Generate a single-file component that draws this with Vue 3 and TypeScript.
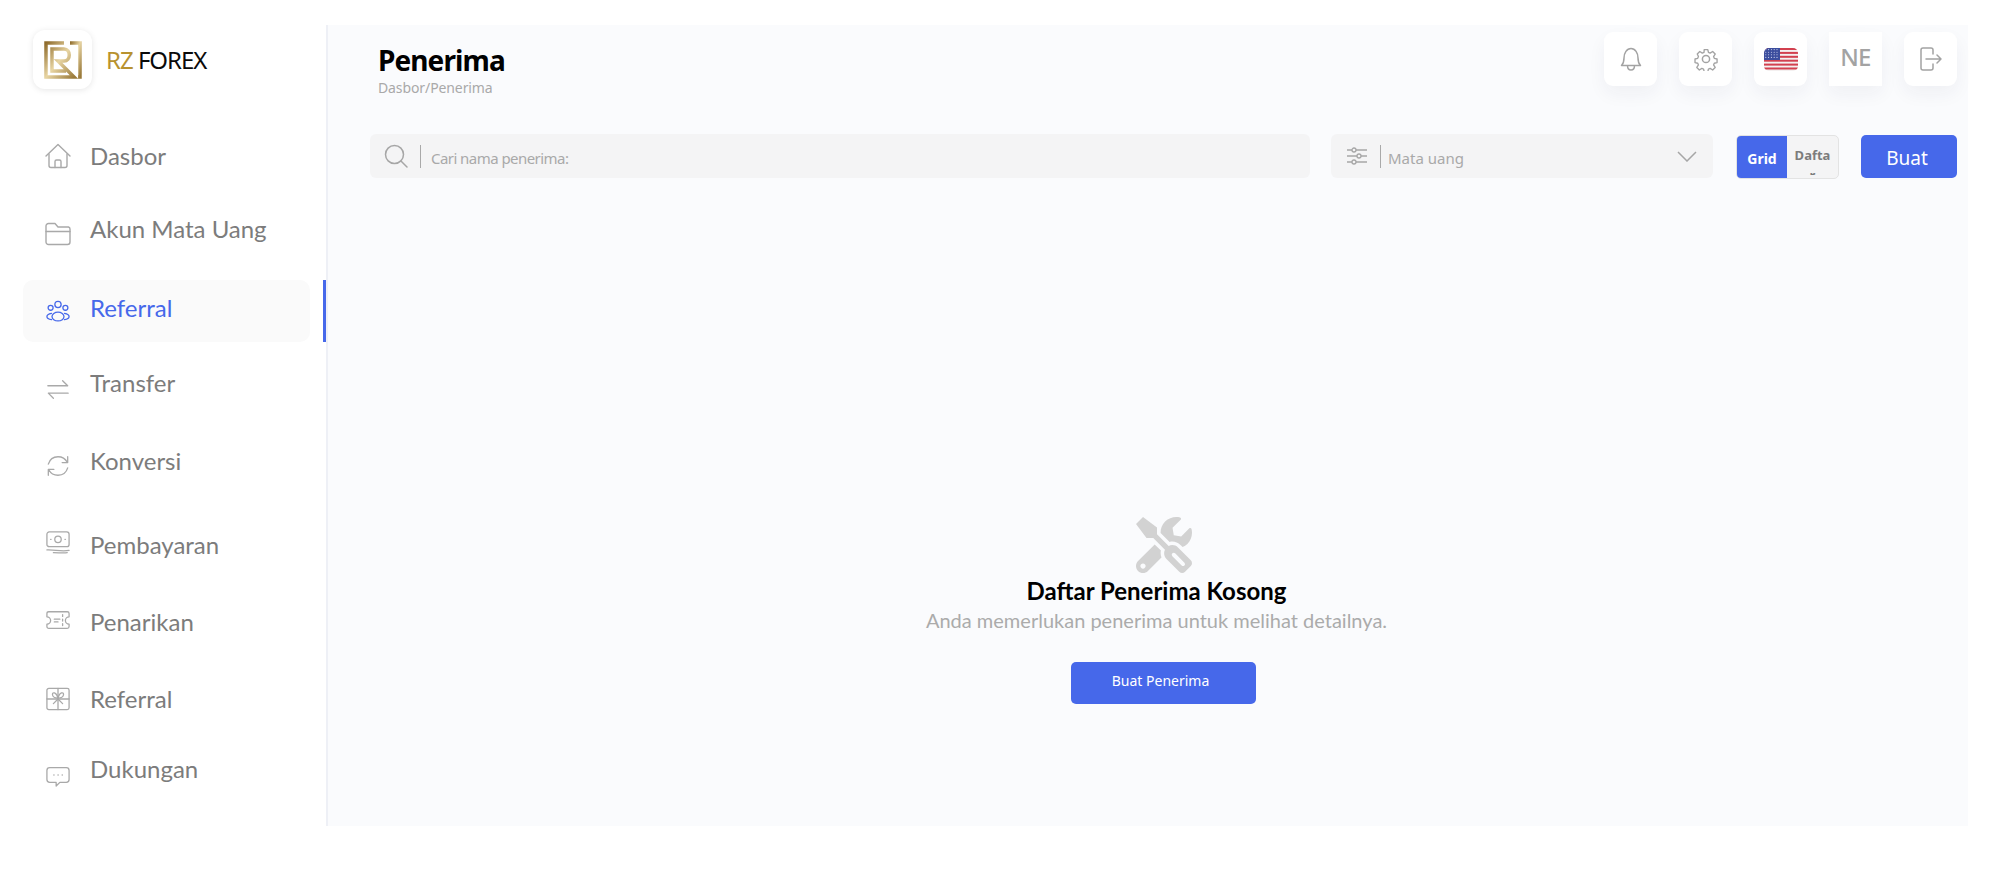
<template>
  <div class="page">
    <aside class="sidebar">
      <div class="brand">
        <div class="logo-box">
          <svg width="38" height="38" viewBox="0 0 38 38" fill="none">
            <defs>
              <linearGradient id="gold" x1="0" y1="0" x2="1" y2="1">
                <stop offset="0" stop-color="#8f6c2c" />
                <stop offset="0.5" stop-color="#e8d5a3" />
                <stop offset="1" stop-color="#9a7a3a" />
              </linearGradient>
            </defs>
            <path d="M20 2H2V36H30L14 20H20C27 20 27 8 20 8H8V30H22" stroke="url(#gold)" stroke-width="3.500" />
            <path d="M26 2H36V36H34" stroke="url(#gold)" stroke-width="3.500" />
          </svg>
        </div>
        <div class="brand-name"><span class="gold">RZ</span> FOREX</div>
      </div>

      <nav class="nav">
        <a
          v-for="item in navItems"
          :key="item.icon"
          class="nav-item"
          :class="{ active: item.active }"
          :style="{ marginTop: item.gap + 'px' }"
        >
          <svg
            class="nav-icon"
            :class="{ small: item.icon !== 'home' && item.icon !== 'folder' }"
            :style="{ transform: `translateY(${item.dy}px)` }"
            viewBox="0 0 26 26"
            fill="none"
            stroke="currentColor"
            stroke-width="1.4"
            stroke-linecap="round"
            stroke-linejoin="round"
          >
            <template v-if="item.icon === 'home'">
              <path d="M1 13 13 1.500 25 13" />
              <path d="M4 11v11.500a2 2 0 0 0 2 2h14a2 2 0 0 0 2-2V11" />
              <path d="M10 24.500v-6a1.500 1.500 0 0 1 1.500-1.500h3a1.500 1.500 0 0 1 1.500 1.500v6" />
            </template>
            <template v-else-if="item.icon === 'folder'">
              <path d="M1 8V6a2.500 2.500 0 0 1 2.500-2.500h6.500l3 3.500h10.500A2 2 0 0 1 25 9v13a2.500 2.500 0 0 1-2.500 2.500h-19A2.500 2.500 0 0 1 1 22z" />
              <path d="M1 11.500h24" />
            </template>
            <template v-else-if="item.icon === 'group'">
              <circle cx="13" cy="6" r="3.400" />
              <circle cx="5" cy="9.500" r="2.700" />
              <circle cx="21" cy="9.500" r="2.700" />
              <ellipse cx="13" cy="19" rx="6.500" ry="4.800" />
              <path d="M6 15.500c-3 .5-5 1.800-5 3.500s2 3 5 3.400M20 15.500c3 .5 5 1.800 5 3.500s-2 3-5 3.400" />
            </template>
            <template v-else-if="item.icon === 'transfer'">
              <path d="M2 9.500h21M18 4l5.500 5.500" />
              <path d="M24 17.500H3M8 23l-5.500-5.500" />
            </template>
            <template v-else-if="item.icon === 'sync'">
              <path d="M2.500 11C4 6 8 3 13 3c4.500 0 8 2.200 10 6M23.500 3v6.300h-6" />
              <path d="M23.500 15c-1.500 5-5.500 8-10.500 8-4.500 0-8-2.200-10-6M2.500 23v-6.300h6" />
            </template>
            <template v-else-if="item.icon === 'money'">
              <rect x="1" y="1" width="24" height="16" rx="2.500" />
              <circle cx="13" cy="9" r="3.500" />
              <path d="M5 9h.5M20.500 9h.5M1 20.500c8-.5 15 2 24 .5M8 23.500c6 0 11 .5 15 0" />
            </template>
            <template v-else-if="item.icon === 'ticket'">
              <path d="M1 5a2 2 0 0 1 2-2h20a2 2 0 0 1 2 2v3.500a4 4 0 0 0 0 8V19a2 2 0 0 1-2 2H3a2 2 0 0 1-2-2v-2.500a4 4 0 0 0 0-8z" />
              <path d="M9 11h6M9 14h4M18 6v2M18 11v2M18 16v2" />
            </template>
            <template v-else-if="item.icon === 'gift'">
              <rect x="1" y="1.500" width="24" height="23" rx="2" />
              <path d="M1 13h24M13 1.500v23" />
              <path d="M13 12c-3 0-6-1.500-6-4s4-3 6 4c2-7 6-6.500 6-4s-3 4-6 4zM13 13l-5 5M13 13l5 5" />
            </template>
            <template v-else>
              <path d="M4 5h18a3 3 0 0 1 3 3v10a3 3 0 0 1-3 3h-7l-4 4v-4H4a3 3 0 0 1-3-3V8a3 3 0 0 1 3-3z" />
              <path d="M8.500 13h.2M13 13h.2M17.500 13h.2" />
            </template>
          </svg>
          <span class="nav-label">{{ item.label }}</span>
          <span v-if="item.active" class="active-bar"></span>
        </a>
      </nav>
    </aside>

    <main class="main">
      <header class="top">
        <div class="title-block">
          <h1>Penerima</h1>
          <p>Dasbor/Penerima</p>
        </div>
        <div class="top-actions">
          <button class="square">
            <svg width="22" height="26" viewBox="0 0 22 26" fill="none" stroke="#a3a3a3" stroke-width="1.500" stroke-linejoin="round">
              <path d="M1.500 19.500c2-2 2.500-3.500 2.500-7.500 0-5 2.800-9.500 7-9.500s7 4.500 7 9.500c0 4 .5 5.500 2.500 7.500z" />
              <path d="M7.500 19.500c0 6 7 6 7 0" />
            </svg>
          </button>
          <button class="square">
            <svg width="24" height="24" viewBox="0 0 24 24" fill="none" stroke="#a3a3a3" stroke-width="1.500" stroke-linejoin="round">
              <circle cx="12" cy="12" r="3.600" />
              <path d="M10 1.500h4l.7 3.200 1.900.8 2.800-1.800 2.800 2.800-1.800 2.800.8 1.900 3.100.8v4l-3.100.7-.8 1.900 1.800 2.800-2.800 2.800-2.800-1.800-1.900.8-.7 3h-4l-.7-3-1.900-.8-2.800 1.800-2.800-2.800 1.800-2.800-.8-1.900-3-.7v-4l3-.8.8-1.900L2.300 6.500l2.800-2.800 2.800 1.800 1.900-.8z" transform="translate(1.200 1.200) scale(.9)" />
            </svg>
          </button>
          <button class="square">
            <svg width="34" height="23" viewBox="0 0 34 23">
              <defs>
                <clipPath id="flagclip"><rect width="34" height="23" rx="5" /></clipPath>
              </defs>
              <g clip-path="url(#flagclip)">
                <rect width="34" height="23" fill="#f4f0f0" />
                <rect v-for="i in 6" :key="i" :y="(i - 1) * 3.900" width="34" height="2" fill="#d2404f" />
                <rect width="16" height="12" fill="#3c4e9e" />
                <template v-for="r in 4" :key="r">
                  <circle v-for="c in 5" :key="c" :cx="c * 2.800 - 1" :cy="r * 2.600 - 1" r=".55" fill="#cfd5ee" />
                </template>
              </g>
            </svg>
          </button>
          <button class="square lang">NE</button>
          <button class="square">
            <svg width="22" height="24" viewBox="0 0 22 24" fill="none" stroke="#a3a3a3" stroke-width="1.500" stroke-linecap="round" stroke-linejoin="round">
              <path d="M13 7V3a2 2 0 0 0-2-2H3a2 2 0 0 0-2 2v18a2 2 0 0 0 2 2h8a2 2 0 0 0 2-2v-4" />
              <path d="M6 12h15M17 8l4 4-4 4" />
            </svg>
          </button>
        </div>
      </header>

      <div class="toolbar">
        <div class="field search">
          <svg width="24" height="24" viewBox="0 0 24 24" fill="none" stroke="#a6a6a6" stroke-width="1.500" stroke-linecap="round">
            <circle cx="10.500" cy="10.500" r="9" />
            <path d="m17 17 6 6" />
          </svg>
          <span class="sep"></span>
          <span class="placeholder cari">Cari nama penerima:</span>
        </div>
        <div class="field select">
          <svg width="20" height="18" viewBox="0 0 20 18" fill="none" stroke="#a6a6a6" stroke-width="1.300">
            <path d="M0 3h5M9 3h11M0 9h10M14 9h6M0 15h5M9 15h11" />
            <circle cx="7" cy="3" r="2" />
            <circle cx="12" cy="9" r="2" />
            <circle cx="7" cy="15" r="2" />
          </svg>
          <span class="sep"></span>
          <span class="placeholder">Mata uang</span>
          <svg class="chevron" width="20" height="11" viewBox="0 0 20 11" fill="none" stroke="#a6a6a6" stroke-width="1.500">
            <path d="m1 1 9 9 9-9" />
          </svg>
        </div>
        <div class="toggle">
          <span class="seg on">Grid</span>
          <span class="seg off"><span class="wrap">Daftar</span></span>
        </div>
        <button class="primary create">Buat</button>
      </div>

      <section class="empty">
        <svg class="tools" width="56" height="58" viewBox="0 0 512 512">
          <path fill="#d2d2d2" d="M501.100 395.700L384 278.600c-23.100-23.100-57.600-27.600-85.400-13.900L192 158.100V96L64 0 0 64l96 128h62.100l106.600 106.600c-13.600 27.800-9.200 62.300 13.900 85.400l117.100 117.100c14.600 14.600 38.200 14.600 52.700 0l52.700-52.700c14.500-14.600 14.500-38.200 0-52.700zM331.700 225c28.300 0 54.900 11 74.900 31l19.400 19.400c15.800-6.900 30.800-16.500 43.800-29.500 37.100-37.100 49.700-89.300 37.900-136.700-2.200-9-13.500-12.100-20.100-5.500l-74.400 74.400-67.900-11.300L334 98.900l74.400-74.400c6.600-6.600 3.400-17.900-5.700-20.200-47.400-11.700-99.600.9-136.600 37.900-28.500 28.500-41.900 66.100-41.200 103.600l82.100 82.100c8.100-1.900 16.500-2.900 24.700-2.900zm-103.900 82l-56.700-56.700L18.700 402.800c-25 25-25 65.500 0 90.500s65.500 25 90.500 0l123.600-123.600c-7.600-19.900-9.900-41.600-5-62.700zM64 472c-13.200 0-24-10.800-24-24 0-13.300 10.700-24 24-24s24 10.700 24 24c0 13.200-10.700 24-24 24z" />
          <path d="M345 345l85 85" stroke="#fafbfd" stroke-width="36" stroke-linecap="round" />
        </svg>
        <h2>Daftar Penerima Kosong</h2>
        <p>Anda memerlukan penerima untuk melihat detailnya.</p>
        <button class="primary cta">Buat Penerima</button>
      </section>
    </main>
  </div>
</template>

<script setup lang="ts">
interface NavItem {
  label: string;
  icon: string;
  gap: number;
  dy: number;
  active?: boolean;
}

const navItems: NavItem[] = [
  { label: "Dasbor", icon: "home", gap: 0, dy: -1 },
  { label: "Akun Mata Uang", icon: "folder", gap: 11, dy: 3 },
  { label: "Referral", icon: "group", gap: 19, dy: 0, active: true },
  { label: "Transfer", icon: "transfer", gap: 11, dy: 5 },
  { label: "Konversi", icon: "sync", gap: 16, dy: 4 },
  { label: "Pembayaran", icon: "money", gap: 22, dy: -3 },
  { label: "Penarikan", icon: "ticket", gap: 15, dy: -2 },
  { label: "Referral", icon: "gift", gap: 15, dy: -1 },
  { label: "Dukungan", icon: "chat", gap: 8, dy: 5 },
];
</script>

<style>
html,
body {
  background: #fff;
}
</style>

<style scoped>
.page {
  display: flex;
  box-sizing: border-box;
  height: 870px;
  padding: 25px 30px 44px 0;
  font-family: "Noto Sans", "Open Sans", sans-serif;
  overflow: hidden;
}

.sidebar {
  box-sizing: border-box;
  width: 328px;
  flex-shrink: 0;
  border-right: 2px solid #eef0f6;
}

.brand {
  display: flex;
  align-items: center;
  gap: 14px;
  margin: 5px 0 37px 33px;
}

.logo-box {
  width: 59px;
  height: 59px;
  display: flex;
  align-items: center;
  justify-content: center;
  background: #fff;
  border-radius: 12px;
  box-shadow: 0 1px 6px rgba(0, 0, 0, 0.1);
}

.brand-name {
  font-size: 24px;
  letter-spacing: -1px;
  color: #0a0a0a;
}

.gold {
  color: #b8922f;
}

.nav {
  display: flex;
  flex-direction: column;
}

.nav-item {
  position: relative;
  display: flex;
  align-items: center;
  gap: 19px;
  box-sizing: border-box;
  width: 287px;
  height: 62px;
  margin-left: 23px;
  padding-left: 22px;
  border-radius: 10px;
  color: #7c7c7c;
  font-family: Lato, "Open Sans", sans-serif;
  font-size: 24px;
}

.nav-label {
  margin-top: -3px;
}

.nav-icon {
  flex-shrink: 0;
  width: 26px;
  height: 26px;
  color: #a9a9a9;
}

.nav-icon.small {
  width: 24px;
  height: 24px;
  margin: 0 1px;
}

.nav-item.active {
  background: #fafafa;
  color: #4668ea;
}

.nav-item.active .nav-icon {
  color: #4668ea;
}

.nav-item.active .nav-label {
  margin-top: -7px;
}

.active-bar {
  position: absolute;
  right: -16px;
  top: 0;
  bottom: 0;
  width: 3px;
  background: #4668ea;
}

.main {
  flex: 1;
  box-sizing: border-box;
  background: #fafbfd;
  padding: 7px 11px 0 42px;
}

.top {
  display: flex;
  justify-content: space-between;
}

.title-block {
  box-sizing: border-box;
  height: 54px;
  padding: 9px 0 0 8px;
}

.title-block h1 {
  margin: 0;
  font-size: 28px;
  line-height: 38px;
  font-weight: 700;
  letter-spacing: -0.9px;
  color: #000;
}

.title-block p {
  margin: 0;
  font-size: 14px;
  line-height: 18px;
  letter-spacing: -0.1px;
  color: #a9a9a9;
}

.top-actions {
  display: flex;
  gap: 22px;
}

.square {
  width: 53px;
  height: 54px;
  display: flex;
  align-items: center;
  justify-content: center;
  padding: 0;
  border: none;
  border-radius: 9px;
  background: #fff;
  box-shadow: 0 8px 18px rgba(30, 40, 70, 0.05);
}

.square.lang {
  font-family: inherit;
  font-size: 24px;
  font-weight: 500;
  letter-spacing: -0.8px;
  color: #a3a3a3;
  border-radius: 0;
  padding-bottom: 5px;
}

.toolbar {
  display: flex;
  gap: 21px;
  margin-top: 48px;
}

.field {
  display: flex;
  align-items: center;
  box-sizing: border-box;
  height: 44px;
  background: #f4f4f5;
  border-radius: 6px;
}

.search {
  flex: 1;
  padding-left: 14px;
}

.select {
  width: 382px;
  padding: 0 16px;
}

.sep {
  width: 1px;
  height: 23px;
  margin: 0 10px;
  background: #a9a9a9;
}

.search .sep {
  margin: 0 10px 0 12px;
}

.select .sep {
  margin: 0 7px 0 13px;
}

.placeholder {
  font-size: 15px;
  color: #a9a9a9;
  padding-top: 4px;
}

.cari {
  letter-spacing: -0.55px;
}

.chevron {
  margin-left: auto;
}

.toggle {
  display: flex;
  box-sizing: border-box;
  width: 103px;
  height: 44px;
  margin: 1px 0 0 2px;
  border: 1px solid #e3e3e3;
  border-radius: 5px;
  background: #f4f4f5;
  overflow: hidden;
  font-size: 14px;
  font-weight: 700;
}

.seg.on {
  width: 50px;
  flex-shrink: 0;
  display: flex;
  align-items: center;
  justify-content: center;
  background: #4668ea;
  color: #fff;
  padding-top: 3px;
  box-sizing: border-box;
}

.seg.off {
  flex: 1;
  color: #7c7c7c;
  padding-top: 9px;
  text-align: center;
  font-size: 13px;
}

.wrap {
  display: block;
  width: 38px;
  height: 30px;
  margin: 0 auto;
  overflow: hidden;
  word-break: break-all;
  line-height: 20px;
  text-align: center;
}

.primary {
  border: none;
  border-radius: 5px;
  background: #4668ea;
  color: #fff;
  font-family: inherit;
}

.create {
  width: 96px;
  height: 43px;
  margin: 1px 0 0 1px;
  font-size: 19px;
  padding: 2px 4px 0 0;
}

.empty {
  display: flex;
  flex-direction: column;
  align-items: center;
  padding-top: 337px;
}

.tools {
  display: block;
}

.empty h2 {
  margin: 0 14px 0 0;
  font-family: Lato, "Open Sans", sans-serif;
  font-size: 24px;
  line-height: 34px;
  font-weight: 700;
  color: #000;
}

.empty p {
  margin: 2px 14px 0 0;
  font-family: Lato, "Open Sans", sans-serif;
  font-size: 20px;
  line-height: 20px;
  color: #ababab;
}

.cta {
  width: 185px;
  height: 42px;
  margin-top: 32px;
  font-size: 14px;
  padding: 0 6px 6px 0;
}
</style>
